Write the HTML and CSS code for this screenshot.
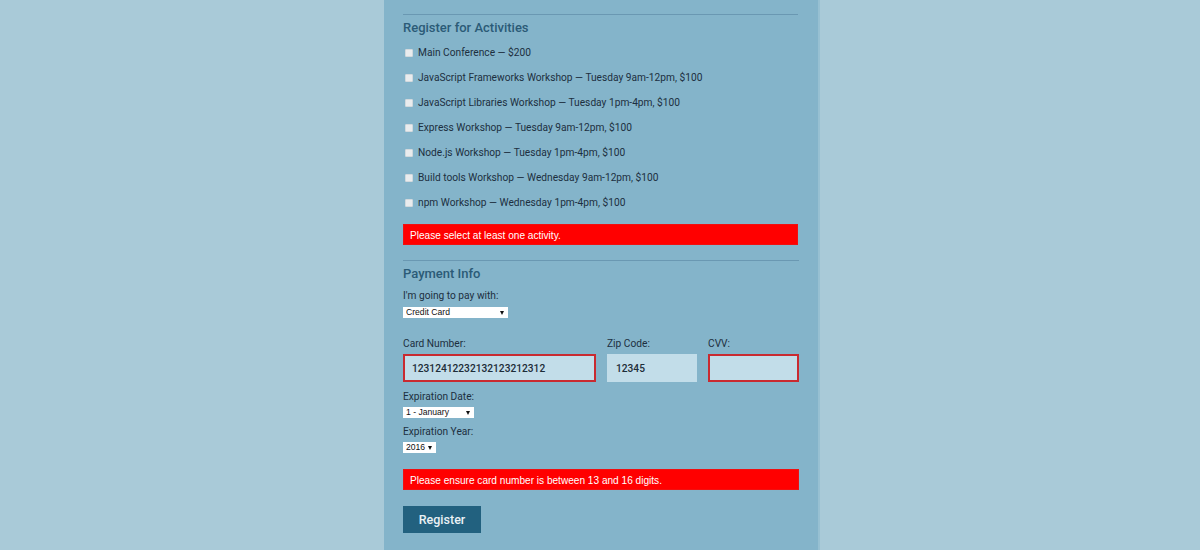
FILE: index.html
```html
<!DOCTYPE html>
<html lang="en">
<head>
<meta charset="utf-8">
<title>Register</title>
<link rel="stylesheet" href="styles.css">
</head>
<body>
<div class="page">
  <form class="form">
    <fieldset class="section">
      <hr class="rule">
      <h2 class="title">Register for Activities</h2>
      <ul class="checks">
        <li><label><input type="checkbox"> Main Conference — $200</label></li>
        <li><label><input type="checkbox"> JavaScript Frameworks Workshop — Tuesday 9am-12pm, $100</label></li>
        <li><label><input type="checkbox"> JavaScript Libraries Workshop — Tuesday 1pm-4pm, $100</label></li>
        <li><label><input type="checkbox"> Express Workshop — Tuesday 9am-12pm, $100</label></li>
        <li><label><input type="checkbox"> Node.js Workshop — Tuesday 1pm-4pm, $100</label></li>
        <li><label><input type="checkbox"> Build tools Workshop — Wednesday 9am-12pm, $100</label></li>
        <li><label><input type="checkbox"> npm Workshop — Wednesday 1pm-4pm, $100</label></li>
      </ul>
      <div class="error error-activity">Please select at least one activity.</div>
    </fieldset>

    <fieldset class="section">
      <hr class="rule rule-payment">
      <h2 class="title title-payment">Payment Info</h2>
      <label class="lbl lbl-pay">I'm going to pay with:</label>
      <div class="select select-pay"><select><option>Credit Card</option></select></div>

      <div class="card-row">
        <div class="field field-card">
          <label class="lbl">Card Number:</label>
          <input class="text invalid" type="text" value="12312412232132123212312">
        </div>
        <div class="field field-zip">
          <label class="lbl">Zip Code:</label>
          <input class="text" type="text" value="12345">
        </div>
        <div class="field field-cvv">
          <label class="lbl">CVV:</label>
          <input class="text invalid" type="text" value="">
        </div>
      </div>

      <label class="lbl lbl-exp">Expiration Date:</label>
      <div class="select select-month"><select><option>1 - January</option></select></div>
      <label class="lbl lbl-year">Expiration Year:</label>
      <div class="select select-year"><select><option>2016</option></select></div>

      <div class="error error-card">Please ensure card number is between 13 and 16 digits.</div>
      <button class="submit" type="button">Register</button>
    </fieldset>
  </form>
</div>
</body>
</html>
```

FILE: styles.css
```css
html, body {
  margin: 0;
  padding: 0;
  height: 100%;
}
body {
  background: #a9cad8;
  font-family: Roboto, "Liberation Sans", sans-serif;
  color: #1c2f40;
  overflow: hidden;
}
.page {
  width: 434px;
  margin-left: 384px;
  min-height: 100%;
  background: #84b4ca;
  border-right: 2px solid #97c0d2;
  box-sizing: content-box;
}
.form {
  padding: 14px 20px 0 19px;
}
.section {
  border: 0;
  margin: 0;
  padding: 0;
}
.rule {
  margin: 0;
  height: 0;
  border: 0;
  border-top: 1px solid #6a98b2;
}
.rule-payment {
  margin-top: 15px;
}
.title {
  margin: 5px 0 0;
  font-size: 13px;
  line-height: 16px;
  font-weight: 500;
  color: #2b5b77;
}
.checks {
  list-style: none;
  margin: 4px 0 0;
  padding: 0;
}
.checks li {
  height: 25px;
  display: flex;
  align-items: center;
}
.checks label {
  display: flex;
  align-items: center;
  font-size: 10.2px;
  line-height: 14px;
  color: #1c2f40;
}
.checks input {
  appearance: none;
  -webkit-appearance: none;
  width: 8px;
  height: 8px;
  margin: 0 5px 0 2px;
  background: #e9ecee;
  border: 1px solid #d2d9dd;
  border-radius: 1px;
  box-sizing: border-box;
}
.error {
  background: #ff0000;
  color: #ffffff;
  font-family: "Liberation Sans", Arial, sans-serif;
  font-size: 10.1px;
  height: 21px;
  line-height: 21px;
  padding-left: 6px;
  box-sizing: border-box;
  border: 1px solid #f01010;
}
.error-activity {
  margin-top: 9px;
}
.error-card {
  margin-top: 16px;
}
.lbl {
  display: block;
  font-size: 10.2px;
  line-height: 14px;
  color: #1c2f40;
}
.lbl-pay {
  margin-top: 7px;
}
.select {
  position: relative;
  background: #ffffff;
  height: 11px;
  margin-top: 4px;
}
.select select {
  appearance: none;
  -webkit-appearance: none;
  border: 0;
  background: transparent;
  width: 100%;
  height: 11px;
  margin: 0;
  padding: 0 0 0 3px;
  font-family: "Liberation Sans", Arial, sans-serif;
  font-size: 8.6px;
  line-height: 11px;
  color: #111;
  display: block;
  outline: none;
}
.select::after {
  content: "";
  position: absolute;
  right: 4px;
  top: 4px;
  border-left: 2.5px solid transparent;
  border-right: 2.5px solid transparent;
  border-top: 4px solid #111;
}
.select-pay { width: 105px; }
.select-month { width: 71px; margin-top: 3px; }
.select-year { width: 33px; margin-top: 3px; }

.card-row {
  display: flex;
  gap: 11px;
  margin-top: 19px;
}
.field {
  display: flex;
  flex-direction: column;
}
.field .text {
  margin-top: 3px;
}
.field-card { width: 193px; }
.field-zip { width: 90px; }
.field-cvv { width: 91px; }
.text {
  height: 28px;
  box-sizing: border-box;
  width: 100%;
  background: #c2dde9;
  border: 2px solid #c2dde9;
  padding: 0 0 0 7px;
  font-family: Roboto, sans-serif;
  font-size: 10.2px;
  font-weight: 500;
  color: #1d2c38;
  outline: none;
}
.text.invalid {
  border-color: #c92a30;
}
.lbl-exp { margin-top: 8px; }
.lbl-year { margin-top: 7px; }

.submit {
  display: block;
  margin-top: 16px;
  width: 78px;
  height: 27px;
  border: 0;
  padding: 0;
  background: #22617f;
  color: #e9f1f5;
  font-family: Roboto, sans-serif;
  font-size: 12.5px;
  font-weight: 500;
}
```
